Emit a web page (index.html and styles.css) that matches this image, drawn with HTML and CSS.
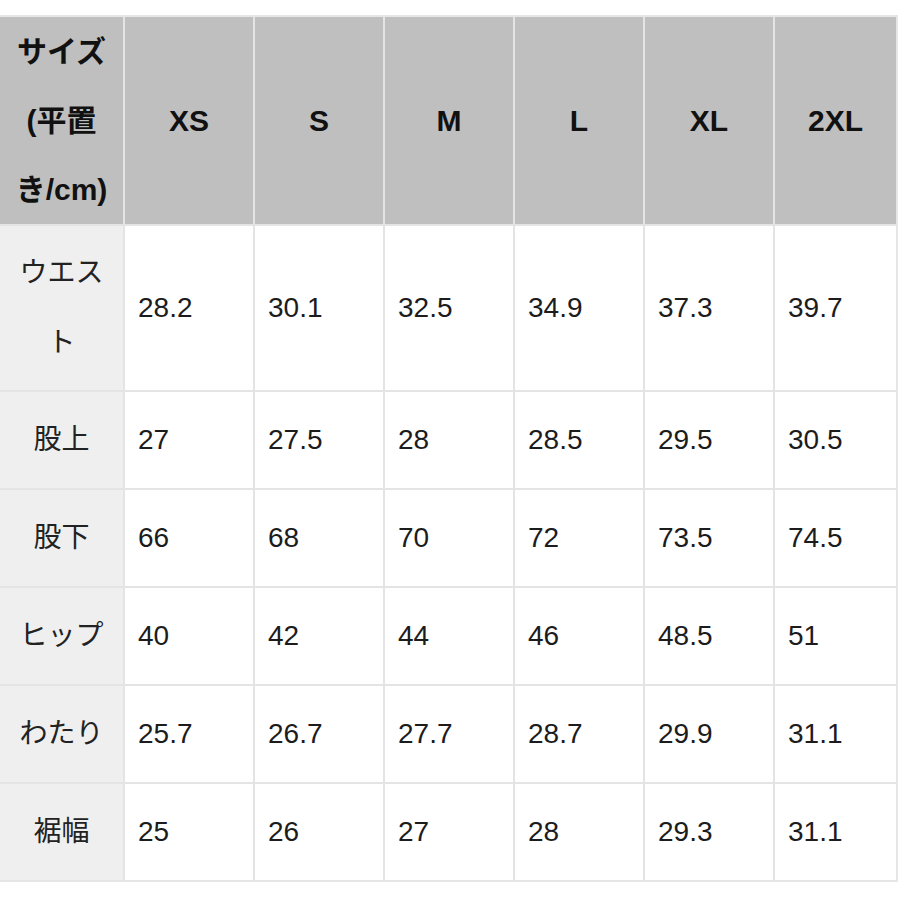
FILE: index.html
```html
<!DOCTYPE html>
<html lang="ja">
<head>
<meta charset="utf-8">
<title>サイズ表</title>
<link rel="stylesheet" href="styles.css">
</head>
<body>
<div class="size-table">
  <div class="cell head first">サイズ<br>(平置<br>き/cm)</div>
  <div class="cell head">XS</div>
  <div class="cell head">S</div>
  <div class="cell head">M</div>
  <div class="cell head">L</div>
  <div class="cell head">XL</div>
  <div class="cell head">2XL</div>

  <div class="cell label">ウエスト</div>
  <div class="cell val">28.2</div><div class="cell val">30.1</div><div class="cell val">32.5</div><div class="cell val">34.9</div><div class="cell val">37.3</div><div class="cell val">39.7</div>

  <div class="cell label">股上</div>
  <div class="cell val">27</div><div class="cell val">27.5</div><div class="cell val">28</div><div class="cell val">28.5</div><div class="cell val">29.5</div><div class="cell val">30.5</div>

  <div class="cell label">股下</div>
  <div class="cell val">66</div><div class="cell val">68</div><div class="cell val">70</div><div class="cell val">72</div><div class="cell val">73.5</div><div class="cell val">74.5</div>

  <div class="cell label">ヒップ</div>
  <div class="cell val">40</div><div class="cell val">42</div><div class="cell val">44</div><div class="cell val">46</div><div class="cell val">48.5</div><div class="cell val">51</div>

  <div class="cell label">わたり</div>
  <div class="cell val">25.7</div><div class="cell val">26.7</div><div class="cell val">27.7</div><div class="cell val">28.7</div><div class="cell val">29.9</div><div class="cell val">31.1</div>

  <div class="cell label">裾幅</div>
  <div class="cell val">25</div><div class="cell val">26</div><div class="cell val">27</div><div class="cell val">28</div><div class="cell val">29.3</div><div class="cell val">31.1</div>
</div>
</body>
</html>
```

FILE: styles.css
```css
html, body {
  margin: 0;
  padding: 0;
  background: #ffffff;
}

body {
  font-family: "Liberation Sans", "Noto Sans CJK JP", Arial, sans-serif;
  color: #1a1a1a;
}

.size-table {
  margin-top: 15px;
  width: 896px;
  display: grid;
  grid-template-columns: 123px repeat(5, 128px) 121px;
  grid-template-rows: 207px 164px repeat(5, 96px);
  gap: 2px;
  background: #e4e4e4;
  border-top: 2px solid #e6e6e6;
  border-right: 2px solid #e6e6e6;
  border-bottom: 2px solid #e6e6e6;
}

.cell {
  display: flex;
  align-items: center;
  background: #ffffff;
  font-size: 28px;
  line-height: 70px;
}

.head {
  background: #bfbfbf;
  justify-content: center;
  font-weight: bold;
  font-size: 30px;
  color: #111111;
}

.head.first {
  text-align: center;
  line-height: 69px;
}

.label {
  background: #efefef;
  justify-content: center;
  text-align: center;
  padding: 0 12px;
  color: #222222;
}

.val {
  justify-content: flex-start;
  padding-left: 13px;
  color: #1c1c1c;
}
```
